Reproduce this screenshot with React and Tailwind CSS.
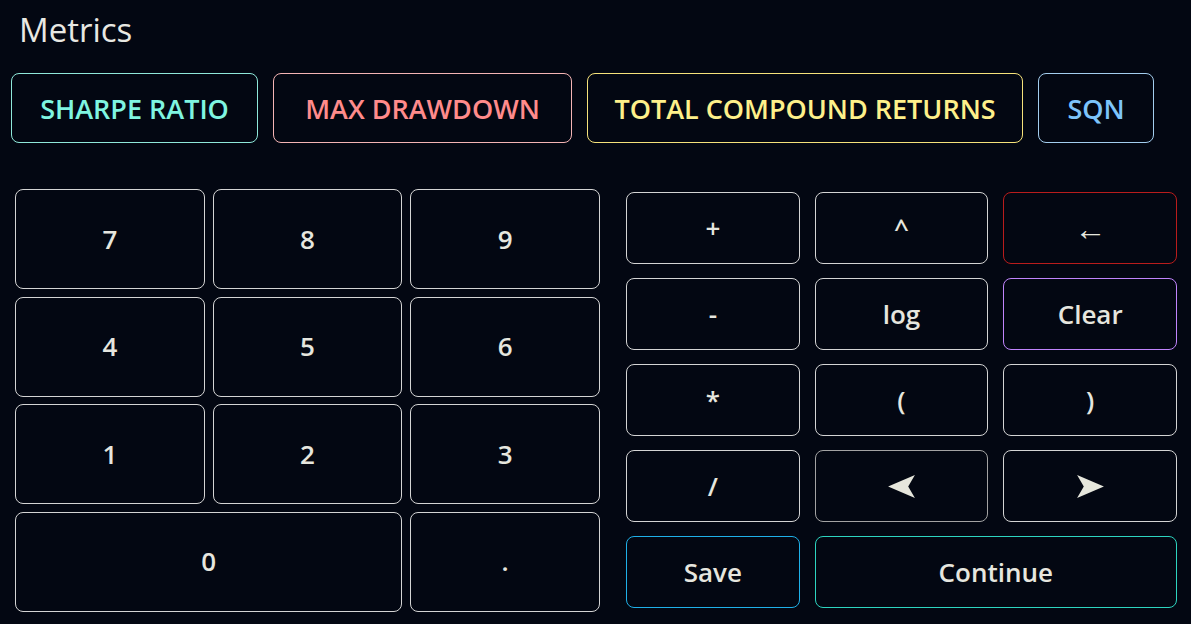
import React from "react";

const metrics = [
  { label: "SHARPE RATIO", cls: "w-[247px] text-[#7ff5e1] border-[#8fe8da]" },
  { label: "MAX DRAWDOWN", cls: "w-[299px] text-[#ff8b8b] border-[#f4b4b4]" },
  { label: "TOTAL COMPOUND RETURNS", cls: "w-[436px] text-[#fef08a] border-[#f6e27a]" },
  { label: "SQN", cls: "w-[116px] text-[#7dc4fb] border-[#a3cdee]" },
];

function Arrow({ dir }) {
  // Arrow head with a notched back, pointing left or right
  const d = dir === "left" ? "M0 12 L28 0 L21 12 L28 24 Z" : "M28 12 L0 0 L7 12 L0 24 Z";
  return (
    <svg viewBox="0 0 28 24" className="w-[27px] h-[23px]" fill="#e6e6dc">
      <path d={d} />
    </svg>
  );
}

function Key({ children, className = "", border = "border-[#d4d4d4]" }) {
  return (
    <button
      className={`flex items-center justify-center rounded-lg border bg-[#030712] text-[26px] font-semibold text-[#e6e6df] ${border} ${className}`}
    >
      {children}
    </button>
  );
}

export default function App() {
  const digits = ["7", "8", "9", "4", "5", "6", "1", "2", "3"];
  return (
    <div
      className="min-h-screen w-full bg-[#030712] pl-[11px] pt-[8px]"
      style={{ fontFamily: '"Open Sans", "Noto Sans", sans-serif' }}
    >
      <h1 className="pl-2 text-[33px] leading-[44px] font-normal text-[#e8e8e2]">Metrics</h1>

      <div className="mt-[21px] flex gap-[15px]">
        {metrics.map((m) => (
          <button
            key={m.label}
            className={`h-[70px] rounded-lg border pt-[3px] text-center text-[27px] font-semibold ${m.cls}`}
          >
            {m.label}
          </button>
        ))}
      </div>

      <div className="mt-[46px] flex">
        <div className="ml-[4px] grid w-[585px] grid-cols-3 auto-rows-[100px] gap-x-2 gap-y-[7.5px]">
          {digits.map((d) => (
            <Key key={d}>{d}</Key>
          ))}
          <Key className="col-span-2">0</Key>
          <Key>.</Key>
        </div>

        <div className="ml-[26px] mt-[3px] grid w-[551px] grid-cols-3 auto-rows-[72px] gap-x-[15px] gap-y-[14px]">
          <Key>+</Key>
          <Key>^</Key>
          <Key border="border-[#b91c1c]" className="text-[32px] font-normal">←</Key>
          <Key>-</Key>
          <Key>log</Key>
          <Key border="border-[#c084fc]">Clear</Key>
          <Key>*</Key>
          <Key>(</Key>
          <Key>)</Key>
          <Key>/</Key>
          <Key border="border-[#a3a3a3]">
            <Arrow dir="left" />
          </Key>
          <Key>
            <Arrow dir="right" />
          </Key>
          <Key border="border-[#1fb0e8]">Save</Key>
          <Key border="border-[#2dd4bf]" className="col-span-2">Continue</Key>
        </div>
      </div>
    </div>
  );
}
